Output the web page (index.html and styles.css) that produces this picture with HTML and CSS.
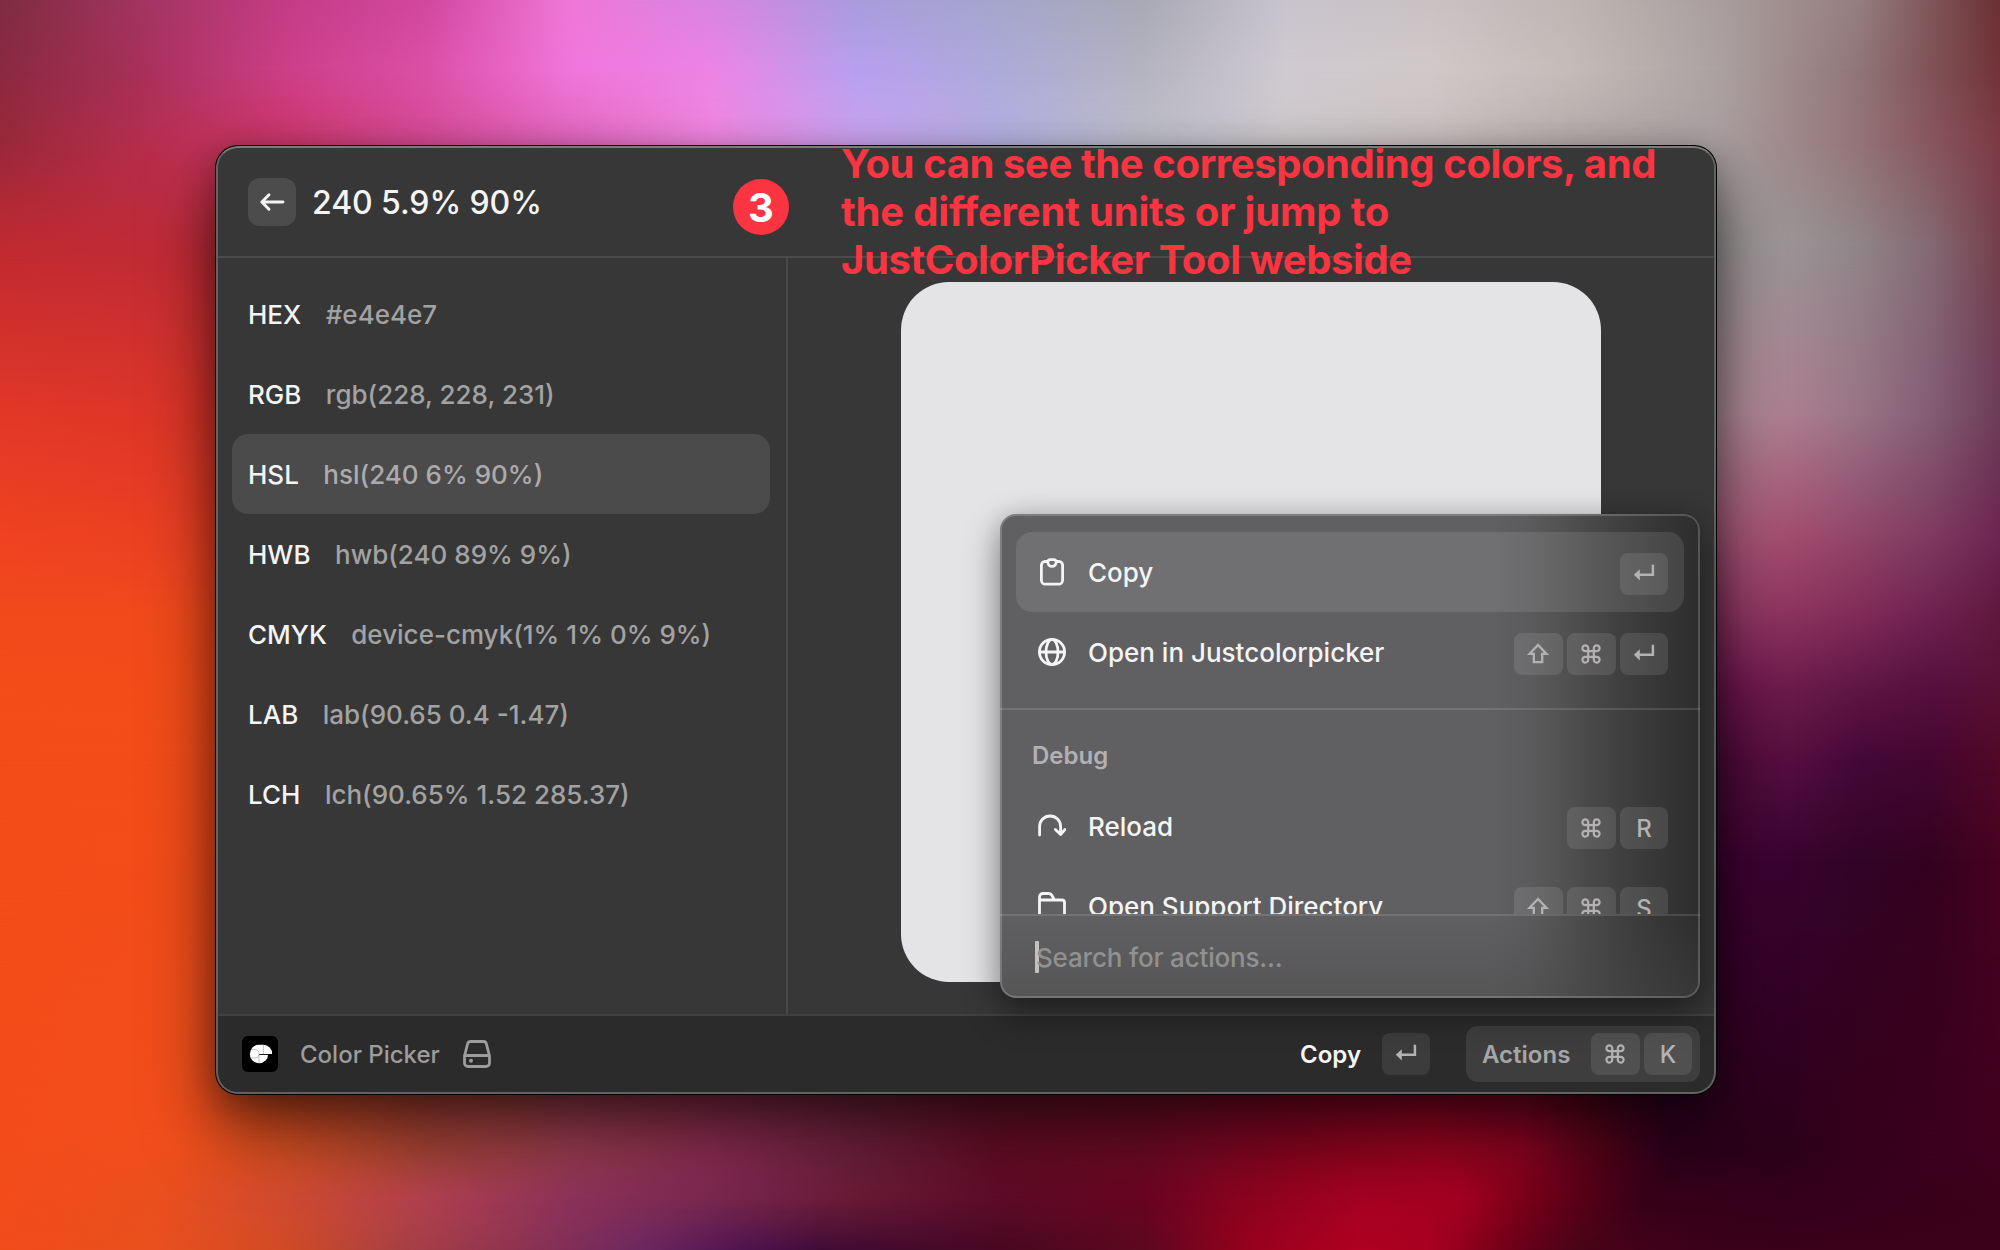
FILE: index.html
```html
<!DOCTYPE html>
<html lang="en">
<head>
<meta charset="utf-8">
<title>Color Picker</title>
<link rel="stylesheet" href="styles.css">
</head>
<body>
<svg class="defs" width="0" height="0" aria-hidden="true">
  <symbol id="enter" viewBox="0 0 24 24"><path d="M20.900 2.800v10H6" fill="none" stroke="currentColor" stroke-width="2.500"/><path d="M1.800 12.800l6-5.600v11.200z" fill="currentColor"/></symbol>
  <symbol id="shift" viewBox="0 0 24 24"><path d="M12 3 3.600 11.800h4.200v8.400h8.400v-8.400h4.200z" fill="none" stroke="currentColor" stroke-width="2.300"/></symbol>
  <symbol id="cmd" viewBox="0 0 24 24"><path d="M9.200 9.200h5.600v5.600H9.200zM9.200 9.200H6.400a2.900 2.900 0 1 1 2.800-2.900zM14.800 9.200V6.300a2.900 2.900 0 1 1 2.800 2.900zM14.800 14.800h2.800a2.900 2.900 0 1 1-2.800 2.900zM9.200 14.800v2.900a2.900 2.900 0 1 1-2.800-2.900z" fill="none" stroke="currentColor" stroke-width="2.200"/></symbol>
</svg>
<div class="wallpaper">
  <i class="band b0"></i><i class="band b1"></i><i class="band b2"></i><i class="band b3"></i><i class="band b4"></i><i class="band b5"></i><i class="band b6"></i><i class="band b7"></i><i class="band b8"></i><i class="band b9"></i><i class="band b10"></i><i class="band b11"></i><i class="band b12"></i>
</div>
<main class="window">
  <header class="header">
    <button class="back"><svg width="28" height="28" viewBox="0 0 28 28"><path d="M25 14H4M11 6.800 3.800 14l7.200 7.200" fill="none" stroke="currentColor" stroke-width="2.900" stroke-linecap="round" stroke-linejoin="round"/></svg></button>
    <h1 class="title">240 5.9% 90%</h1>
  </header>
  <section class="content">
    <ul class="list">
      <li class="row"><b>HEX</b><span>#e4e4e7</span></li>
      <li class="row"><b>RGB</b><span>rgb(228, 228, 231)</span></li>
      <li class="row selected"><b>HSL</b><span>hsl(240 6% 90%)</span></li>
      <li class="row"><b>HWB</b><span>hwb(240 89% 9%)</span></li>
      <li class="row"><b>CMYK</b><span>device-cmyk(1% 1% 0% 9%)</span></li>
      <li class="row"><b>LAB</b><span>lab(90.65 0.4 -1.47)</span></li>
      <li class="row"><b>LCH</b><span>lch(90.65% 1.52 285.37)</span></li>
    </ul>
    <div class="detail"><div class="swatch"></div></div>
  </section>
  <footer class="footer">
    <svg class="logo" width="36" height="36" viewBox="0 0 36 36"><rect width="36" height="36" rx="6" fill="#000"/><circle cx="17" cy="18" r="9.200" fill="#fff"/><path d="M18 8.800h3.400a8.800 8.800 0 0 1 8.700 9.300H18z" fill="#fff"/><path d="M17 18.500h13" stroke="#000" stroke-width=".9"/><path d="M17 18.500V27M9 13.500h4a4 4 0 0 1 4 5a3.800 3.800 0 0 1-4 3.500H9M21.400 9v9" fill="none" stroke="#999" stroke-width=".6"/></svg>
    <span class="app">Color Picker</span>
    <svg class="drive" width="28" height="28" viewBox="0 0 28 28"><path d="M7.600 1.500h12.800a3 3 0 0 1 3 2.400L26.500 16v7a3.500 3.500 0 0 1-3.500 3.500H5A3.500 3.500 0 0 1 1.500 23v-7L4.600 3.900a3 3 0 0 1 3-2.400zM1.800 15.500h24.400" fill="none" stroke="currentColor" stroke-width="2.800"/><circle cx="8" cy="20.800" r="2" fill="currentColor"/></svg>
    <div class="primary"><strong>Copy</strong><kbd><svg><use href="#enter"/></svg></kbd></div>
    <div class="actions"><strong>Actions</strong><span class="keys"><kbd><svg><use href="#cmd"/></svg></kbd><kbd>K</kbd></span></div>
  </footer>
</main>
<aside class="popup">
  <div class="menu">
    <div class="item active">
      <svg class="icon" viewBox="0 0 28 28"><path d="M9.500 3.500H6.500A4 4 0 0 0 3.400 7v15.200a4 4 0 0 0 4 4h13.200a4 4 0 0 0 4-4V7a4 4 0 0 0-3.100-3.500h-3"/><path d="M9.800 4.200a2.600 2.600 0 0 1 2.600-2.500h3.200a2.600 2.600 0 0 1 2.600 2.500a4.200 4.200 0 0 1-8.400 0z"/></svg>
      <span>Copy</span><span class="keys"><kbd><svg><use href="#enter"/></svg></kbd></span></div>
    <div class="item">
      <svg class="icon" viewBox="0 0 28 28"><circle cx="14" cy="14" r="12.600"/><ellipse cx="14" cy="14" rx="6" ry="12.600"/><path d="M1.500 14h25"/></svg>
      <span>Open in Justcolorpicker</span><span class="keys"><kbd><svg><use href="#shift"/></svg></kbd><kbd><svg><use href="#cmd"/></svg></kbd><kbd><svg><use href="#enter"/></svg></kbd></span></div>
    <hr>
    <h2>Debug</h2>
    <div class="item">
      <svg class="icon" viewBox="0 0 28 28"><path d="M1.600 23V14.500a10.500 10.500 0 0 1 21 0V22M17.400 17.500l5.200 5 4.300-5" stroke-linecap="round" stroke-linejoin="round"/></svg>
      <span>Reload</span><span class="keys"><kbd><svg><use href="#cmd"/></svg></kbd><kbd>R</kbd></span></div>
    <div class="item">
      <svg class="icon" viewBox="0 0 28 28"><path d="M1.500 24V5a3.500 3.500 0 0 1 3.500-3.500h5.500a4 4 0 0 1 3.200 1.600L16.500 8H24a2.500 2.500 0 0 1 2.500 2.500V24A2.500 2.500 0 0 1 24 26.500H4A2.500 2.500 0 0 1 1.500 24zM1.500 8h15"/></svg>
      <span>Open Support Directory</span><span class="keys"><kbd><svg><use href="#shift"/></svg></kbd><kbd><svg><use href="#cmd"/></svg></kbd><kbd>S</kbd></span></div>
  </div>
  <div class="search"><i class="caret"></i><span>Search for actions...</span></div>
</aside>
<div class="step">3</div>
<p class="note"><span class="l1">You can see the corresponding colors, and</span><br><span class="l2">the different units or jump to</span><br><span class="l3">JustColorPicker Tool webside</span></p>
</body>
</html>
```
FILE: styles.css
```css
* { box-sizing: border-box; margin: 0; padding: 0; }
body {
  width: 2000px; height: 1250px; overflow: hidden; position: relative;
  display: flex; flex-direction: column; align-items: flex-start;
  padding: 146px 0 0 216px;
  font-family: Inter, "Liberation Sans", sans-serif; font-size: 26px; color: #f4f4f4;
}
.defs { position: absolute; }

/* Wallpaper: colour bands, each fading into the next one down */
.wallpaper { position: absolute; inset: 0; z-index: -1; }
.band { position: absolute; left: 0; right: 0; top: var(--y); bottom: 0;
  -webkit-mask-image: linear-gradient(to bottom, transparent, #000 var(--h));
  mask-image: linear-gradient(to bottom, transparent, #000 var(--h)); }
.b0 { --y: 0px; --h: 0px; background: linear-gradient(to right, #7f2c42, #a33560, #c53c85, #d348a0, #f078d8, #d884e0, #a89cdc, #a6a6cc, #a9a9b6, #c8c4cc, #c9c2c4, #bfb6b4, #ab9f9f, #967f80, #6b3034); }
.b1 { --y: 0px; --h: 70px; background: linear-gradient(to right, #8a2a40, #a8305a, #cc3f88, #dc50a8, #f076dc, #ec84e4, #b6a0f0, #adaad8, #b4b3c0, #cfcad0, #d0c9c9, #c3bcb9, #ada2a2, #917678, #703338); }
.b2 { --y: 70px; --h: 70px; background: linear-gradient(to right, #98283a, #b42e4e, #cc386c, #d84c98, #e468c0, #f288e2, #cca4f2, #b6b2e4, #c0c0cc, #cecacc, #cac2c2, #b8aeae, #aba0a2, #947478, #7c3a44); }
.b3 { --y: 140px; --h: 107px; background: linear-gradient(to right, #c02a30, #c02c3c, #c03050 30%, #c0b0b8 70%, #a8a0a4 80%, #9c9898 86%, #9a9496 89.5%, #908488 93%, #846a74 96.5%, #743f4c); }
.b4 { --y: 247px; --h: 168px; background: linear-gradient(to right, #e23828, #d83428, #c03050 30%, #b0a0a8 70%, #b08c98 86%, #ac7e90 89.5%, #987484 93%, #845e74 96.5%, #6c3c58); }
.b5 { --y: 415px; --h: 125px; background: linear-gradient(to right, #f04220, #e84024, #c03050 30%, #b080a0 80%, #a85878 86%, #a24c6c 89.5%, #904468 93%, #7e3a60 96.5%, #6c2450); }
.b6 { --y: 540px; --h: 73px; background: linear-gradient(to right, #f24a1c, #f04a1c, #c03050 30%, #982868 82%, #903864 87%, #8c3460 89.5%, #802c58 93%, #702250 96.5%, #60183e); }
.b7 { --y: 613px; --h: 74px; background: linear-gradient(to right, #f34d18, #f24c1a, #c03050 30%, #701450 85%, #6c1c4a 89.5%, #601644 93%, #561040 96.5%, #5a1034); }
.b8 { --y: 687px; --h: 73px; background: linear-gradient(to right, #f34c18, #f24d1a, #b04040 30%, #500c3c 86%, #560f40 89.5%, #440838 93%, #440630 96.5%, #520826); }
.b9 { --y: 760px; --h: 100px; background: linear-gradient(to right, #f34c18, #f24d1a, #b04040 30%, #400434 86%, #380430 89.5%, #320426 93%, #340220 96.5%, #46031e); }
.b10 { --y: 860px; --h: 290px; background: linear-gradient(to right, #f24c1a, #f04f1c 9%, #d85024 14.3%, #a84438 21.4%, #983c50 28.6%, #8a2c50 35.7%, #6c203c 42.9%, #640c26 50%, #6c0a24 57.1%, #88041f 64.3%, #9a0420 71.4%, #8c0420 76%, #5a0418 79.5%, #2c001a 83.5%, #2c001a 89.5%, #36001a 93%, #40001c); }
.b11 { --y: 1150px; --h: 50px; background: linear-gradient(to right, #f24c1a, #ea4f1e 8%, #d04a30 14.3%, #b04050 21.4%, #8c325a 28.6%, #782850 35.7%, #681a34 42.9%, #5c0c28 50%, #680422 57.1%, #880420 61.5%, #a60222 68%, #a40020 73%, #700018 77%, #380018 82%, #34001a 89.5%, #38001a 93%, #3c001a); }
.b12 { --y: 1200px; --h: 50px; background: linear-gradient(to right, #f04c1a, #e8501e 8%, #d04a24 14.3%, #a84044 20%, #903450 25.5%, #6c2860 32%, #501450 37%, #400c38 41%, #480820 50%, #5c0820 57.1%, #98001c 62.5%, #b00020 68%, #a80020 71.5%, #680018 76%, #480418 79%, #3c001a 85%, #3c001a); }

.window {
  position: relative; width: 1500px; height: 948px; border-radius: 22px;
  display: flex; flex-direction: column; background: #373737;
  box-shadow: 0 0 0 1px #000, 0 36px 70px rgba(0,0,0,.55), 0 8px 34px rgba(0,0,0,.3);
  overflow: hidden;
}
.window::after { content: ""; position: absolute; inset: 0; border: 2px solid #626262; border-top-color: #7b7b7b; border-radius: 22px; }
.header { height: 112px; border-bottom: 2px solid #4b4b4b; display: flex; align-items: center; gap: 16px; padding: 2px 32px 0; flex: none; }
.back { width: 48px; height: 48px; border: 0; border-radius: 12px; background: #4c4c4c; color: #f4f4f4; display: grid; place-items: center; }
.title { font-size: 32px; font-weight: 450; letter-spacing: -.08px; }
.content { flex: 1; display: flex; min-height: 0; }
.list { list-style: none; width: 572px; border-right: 2px solid #484848; padding: 16px; }
.row { height: 80px; display: flex; align-items: center; gap: 24.500px; padding: 0 16px; border-radius: 16px; width: 538px; white-space: nowrap; }
.row b { font-weight: 500; }
.row span { color: #a2a2a2; font-weight: 480; }
.row.selected { background: #4b4b4b; }
.row.selected span { color: #adaaab; }
.detail { flex: 1; display: flex; padding: 24px 0 0 113px; }
.swatch { width: 700px; height: 700px; border-radius: 48px; background: #e4e4e7; }
.footer { height: 80px; flex: none; border-top: 2px solid #414141; background: #2b2b2b; display: flex; align-items: center; padding: 0 16px 2px 26px; font-size: 24px; color: #9c9c9c; }
.app { margin-left: 22px; font-weight: 500; }
.drive { margin-left: 23px; }
.primary { margin-left: auto; display: flex; align-items: center; gap: 21px; }
.primary strong { color: #f6f6f6; font-weight: 600; }
.primary kbd { background: #3c3c3c; }
.actions { margin-left: 36px; width: 234px; height: 56px; border-radius: 12px; background: #3e3e3e; display: flex; align-items: center; justify-content: space-between; padding: 0 8px 0 16px; }
.actions strong { font-weight: 600; color: #a6a6a6; }
.actions kbd { background: #505050; }
.keys { display: flex; gap: 4px; }
kbd { font: 500 24px Inter, sans-serif; width: 49px; height: 42px; border-radius: 8px; background: rgba(255,255,255,.1); color: #b4b2b3; display: grid; place-items: center; }
kbd:last-child { width: 48px; }
kbd svg { width: 24px; height: 24px; display: block; }
kbd:not(:last-child) svg { margin-right: 1px; }

/* Action menu that floats over the window */
.popup {
  position: absolute; left: 1000px; top: 514px; width: 700px; height: 484px; border-radius: 16px;
  background: linear-gradient(to bottom, transparent 400px, rgba(70,70,70,.4) 484px), linear-gradient(to right, #606062 490px, #5b5b5d 530px, #515151 565px, #414141 615px, #373737 655px, #2e2e2e 695px);
  box-shadow: 0 14px 36px rgba(0,0,0,.42), 0 0 22px rgba(0,0,0,.12);
  display: flex; flex-direction: column; overflow: hidden;
}
.popup::after { content: ""; position: absolute; inset: 0; border: 2px solid rgba(255,255,255,.19); border-radius: 16px; }
.menu { height: 400px; padding: 18px 16px 0; overflow: hidden; flex: none; }
.item { height: 80px; border-radius: 16px; display: flex; align-items: center; padding: 0 16px 0 22px; font-weight: 500; }
.item.active { background: rgba(255,255,255,.1); }
.item .keys { margin-left: auto; padding-top: 4px; }
.icon { width: 28px; height: 28px; margin-right: 22px; fill: none; stroke: #f4f4f4; stroke-width: 2.8; flex: none; }
hr { border: 0; height: 2px; background: rgba(255,255,255,.12); margin: 16px -16px 0; }
h2 { height: 76px; padding: 16px 16px 0; font-size: 24px; line-height: 60px; font-weight: 600; color: #b2b0b3; }
.search { flex: 1; border-top: 2px solid rgba(255,255,255,.12); display: flex; align-items: center; padding: 0 35px 0; color: #919191; font-weight: 450; letter-spacing: -.18px; }
.caret { width: 4px; height: 32px; background: #c2c2c2; border-radius: 1px; margin-right: -3px; }

/* Tutorial annotations */
.step { position: absolute; left: 733px; top: 179px; width: 56px; height: 56px; border-radius: 50%; background: #fa3441; color: #fff; font-size: 40px; font-weight: 700; display: grid; place-items: center; }
.note { position: absolute; left: 841px; top: 140px; font-size: 40px; line-height: 48px; font-weight: 680; color: #fa3441; white-space: nowrap; }
.l1 { letter-spacing: -.4px; }
.l2 { letter-spacing: -.17px; }
.l3 { letter-spacing: -.39px; }
```
